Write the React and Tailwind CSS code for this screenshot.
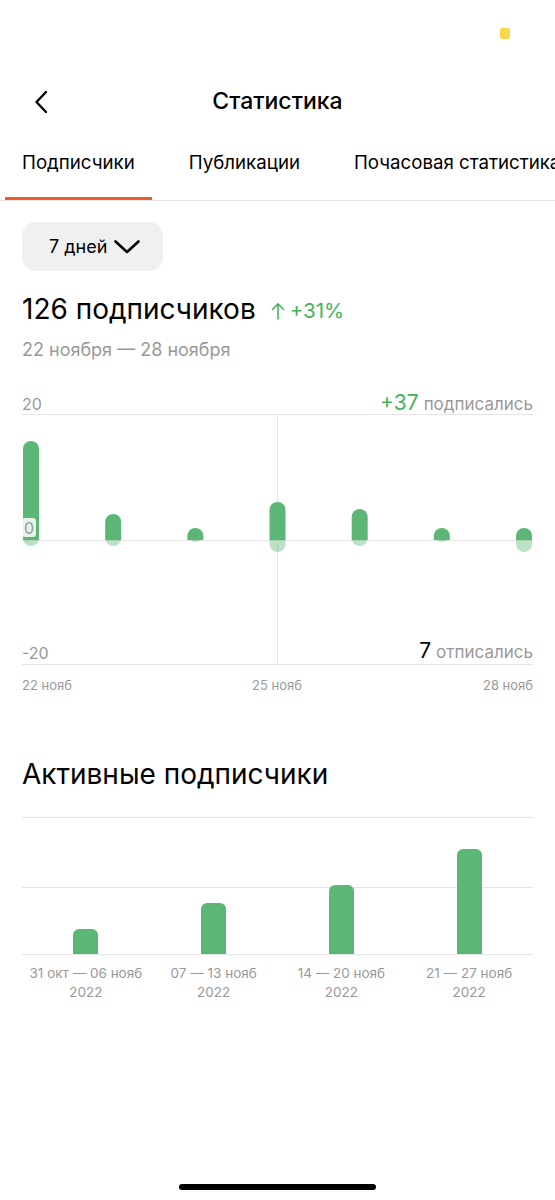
import React from "react";

const FONT = { fontFamily: "Inter, 'Noto Sans', sans-serif" };

function BackIcon() {
  return (
    <svg width="14" height="24" viewBox="0 0 14 24" fill="none">
      <path d="M12 2 L2.5 12 L12 22" stroke="#000" strokeWidth="2.4" strokeLinecap="round" strokeLinejoin="round" />
    </svg>
  );
}

function ChevronDown() {
  return (
    <svg width="28" height="16" viewBox="0 0 28 16" fill="none">
      <path d="M2.5 2.5 L14 13 L25.5 2.5" stroke="#000" strokeWidth="2.6" strokeLinecap="round" strokeLinejoin="round" />
    </svg>
  );
}

function ArrowUp() {
  return (
    <svg width="14" height="18" viewBox="0 0 14 18" fill="none">
      <path d="M7 17 V2 M1.5 7.5 L7 1.8 L12.5 7.5" stroke="#45b35a" strokeWidth="1.6" strokeLinecap="round" strokeLinejoin="round" />
    </svg>
  );
}

const bars1 = [
  { top: 51, bottom: 156 },
  { top: 124, bottom: 156 },
  { top: 138, bottom: 152 },
  { top: 112, bottom: 162 },
  { top: 119, bottom: 156 },
  { top: 138, bottom: 152 },
  { top: 138, bottom: 162 },
];

function DailyChart() {
  const zero = 150;
  const w = 16;
  const r = 8;
  return (
    <div className="relative mx-[22px] mt-[28px] h-[310px]">
      <svg width="511" height="310" viewBox="0 0 511 310" className="block">
        <defs>
          <clipPath id="below">
            <rect x="0" y={zero} width="511" height="200" />
          </clipPath>
        </defs>
        <line x1="0" y1="24.5" x2="511" y2="24.5" stroke="#e4e4e4" strokeWidth="1" />
        <line x1="0" y1="150.5" x2="511" y2="150.5" stroke="#e4e4e4" strokeWidth="1" />
        <line x1="0" y1="274.5" x2="511" y2="274.5" stroke="#e4e4e4" strokeWidth="1.2" />
        <line x1="255.5" y1="24" x2="255.5" y2="275" stroke="#e4e4e4" strokeWidth="1" />
        {bars1.map((b, i) => {
          const x = 1 + i * 82.17;
          return (
            <g key={i}>
              <rect
                x={x}
                y={zero - 20}
                width={w}
                height={b.bottom - zero + 20}
                rx={r}
                fill="#5cb776"
                fillOpacity="0.42"
                clipPath="url(#below)"
              />
              <path
                d={`M ${x} ${zero} V ${b.top + r} A ${r} ${r} 0 0 1 ${x + w} ${b.top + r} V ${zero} Z`}
                fill="#5cb776"
              />
            </g>
          );
        })}
      </svg>
      <div className="absolute left-0 top-[6px] text-[16px] leading-none text-[#999999]">20</div>
      <div className="absolute right-0 top-[2px] flex items-baseline gap-[5px] leading-none">
        <span className="text-[21px] text-[#45b35a]">+37</span>
        <span className="text-[17px] text-[#999999]">подписались</span>
      </div>
      <div className="absolute left-0 top-[128px] flex h-[19px] items-center rounded-[3px] bg-white/85 px-[2px] text-[16px] leading-none text-[#999999]">
        0
      </div>
      <div className="absolute left-0 top-[255px] text-[16px] leading-none text-[#999999]">-20</div>
      <div className="absolute right-0 top-[250px] flex items-baseline gap-[5px] leading-none">
        <span className="text-[21px] text-black">7</span>
        <span className="text-[17px] text-[#999999]">отписались</span>
      </div>
      <div className="absolute left-0 top-[289px] text-[13px] leading-none text-[#999999]">22 нояб</div>
      <div className="absolute left-[255px] top-[289px] -translate-x-1/2 whitespace-nowrap text-[13px] leading-none text-[#999999]">
        25 нояб
      </div>
      <div className="absolute right-0 top-[289px] text-[13px] leading-none text-[#999999]">28 нояб</div>
    </div>
  );
}

const weeks = [
  { label: "31 окт — 06 нояб", h: 25 },
  { label: "07 — 13 нояб", h: 51 },
  { label: "14 — 20 нояб", h: 69 },
  { label: "21 — 27 нояб", h: 105 },
];

function WeeklyChart() {
  return (
    <div className="mx-[22px] mt-[26px]">
      <div className="relative h-[138px] border-y border-[#e4e4e4]">
        <div className="absolute left-0 right-0 top-[69px] h-px bg-[#e4e4e4]" />
        <div className="relative grid h-full grid-cols-4 items-end">
          {weeks.map((wk) => (
            <div key={wk.label} className="flex justify-center">
              <div className="w-[25px] rounded-t-[6px] bg-[#5cb776]" style={{ height: wk.h }} />
            </div>
          ))}
        </div>
      </div>
      <div className="mt-[9px] grid grid-cols-4">
        {weeks.map((wk) => (
          <div key={wk.label} className="text-center text-[13.5px] leading-[19px] text-[#999999] whitespace-nowrap">
            <div>{wk.label}</div>
            <div>2022</div>
          </div>
        ))}
      </div>
    </div>
  );
}

export default function App() {
  return (
    <div className="flex h-[1200px] w-[555px] flex-col overflow-hidden bg-white text-black" style={FONT}>
      {/* status bar */}
      <div className="flex h-[56px] justify-end pr-[45px] pt-[28px]">
        <div className="h-[11px] w-[10px] rounded-[2px] bg-[#f7d84a]" />
      </div>

      {/* nav bar */}
      <div className="grid h-[90px] grid-cols-[1fr_auto_1fr] items-center">
        <div className="pl-[34px] pt-[2px]">
          <BackIcon />
        </div>
        <div className="text-[23px] font-medium leading-none">Статистика</div>
        <div />
      </div>

      {/* tabs */}
      <div className="flex h-[55px] gap-[20px] overflow-hidden whitespace-nowrap border-b border-[#e2e2e2] pl-[5px]">
        <div className="h-[54px] border-b-[3px] border-[#ee5a2c] px-[17px] pt-[5px] text-[18.7px] leading-[24px]">
          Подписчики
        </div>
        <div className="h-[54px] border-b-[3px] border-transparent px-[17px] pt-[5px] text-[18.7px] leading-[24px]">
          Публикации
        </div>
        <div className="h-[54px] border-b-[3px] border-transparent px-[17px] pt-[5px] text-[18.7px] leading-[24px]">
          Почасовая статистика
        </div>
      </div>

      {/* period selector */}
      <div className="ml-[22px] mt-[21px] flex h-[49px] w-[141px] items-center gap-[6px] rounded-[14px] bg-[#f0f0f2] pl-[27px]">
        <span className="text-[18px] leading-none">7 дней</span>
        <ChevronDown />
      </div>

      {/* summary */}
      <div className="ml-[22px] mt-[21px] flex h-[34px] items-center gap-[15px]">
        <span className="text-[28px] leading-[34px]">126 подписчиков</span>
        <span className="flex items-center gap-[5px] pt-[3px] text-[20.5px] leading-[24px] text-[#45b35a]">
          <ArrowUp />
          <span>+31%</span>
        </span>
      </div>
      <div className="ml-[22px] mt-[12px] text-[18px] leading-[24px] text-[#999999]">22 ноября — 28 ноября</div>

      <DailyChart />

      <div className="ml-[22px] mt-[57px] text-[28px] leading-[34px]">Активные подписчики</div>

      <WeeklyChart />

      {/* home indicator */}
      <div className="mt-auto flex justify-center pb-[10px]">
        <div className="h-[6px] w-[197px] rounded-full bg-black" />
      </div>
    </div>
  );
}
